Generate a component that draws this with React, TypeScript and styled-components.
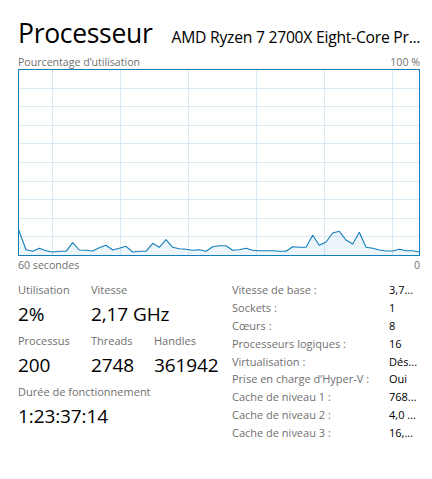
import React from "react";
import styled, { createGlobalStyle } from "styled-components";

const Global = createGlobalStyle`
  html, body { margin: 0; padding: 0; background: #ffffff; }
  body { font-family: "Open Sans", "Noto Sans", sans-serif; color: #000; }
`;

const Page = styled.div`
  width: 432px;
  height: 479px;
  box-sizing: border-box;
  padding: 17px 0 0 18px;
  overflow: hidden;
`;

const Header = styled.div`
  display: flex;
  align-items: baseline;
  width: 414px;
  white-space: nowrap;
`;

const Title = styled.div`
  font-size: 26.5px;
  line-height: 32px;
  letter-spacing: -0.3px;
  color: #000;
`;

const Model = styled.div`
  margin-left: 19px;
  font-size: 15.7px;
  letter-spacing: -0.25px;
  color: #000;
`;

const AxisRow = styled.div<{ $top: number }>`
  display: flex;
  justify-content: space-between;
  width: 402px;
  margin-top: ${(p) => p.$top}px;
  font-size: 10.6px;
  line-height: 14px;
  color: #707070;
`;

const ChartBox = styled.div`
  width: 402px;
  height: 187px;
  box-sizing: border-box;
  border: 1px solid #117dbb;
`;

const ChartSvg = styled.svg`
  display: block;
  width: 400px;
  height: 185px;
`;

const Stats = styled.div`
  display: flex;
  margin-top: 10px;
`;

const LeftStats = styled.div`
  display: grid;
  grid-template-columns: 73px 63px auto;
  grid-auto-rows: 51px;
  width: 214px;
`;

const Stat = styled.div<{ $span?: number }>`
  grid-column: span ${(p) => p.$span ?? 1};
  display: flex;
  flex-direction: column;
  white-space: nowrap;
`;

const StatLabel = styled.div`
  font-size: 11px;
  line-height: 16px;
  margin-bottom: 3px;
  color: #707070;
`;

const StatValue = styled.div`
  font-size: 19px;
  line-height: 26px;
  color: #000;
  letter-spacing: -0.1px;
`;

const InfoTable = styled.div`
  display: grid;
  grid-template-columns: 157px auto;
  grid-auto-rows: 17.9px;
  width: 188px;
  white-space: nowrap;
  font-size: 11px;
  line-height: 16px;
`;

const InfoLabel = styled.div`
  color: #707070;
`;

const InfoValue = styled.div`
  color: #000;
`;

const points: [number, number][] = [
  [19, 231.7], [26, 250.7], [32.7, 252.3], [39.3, 249.3], [46, 251.7], [52.7, 253],
  [59.3, 252.3], [66, 252.3], [72.7, 243.7], [79.3, 251], [86, 251.3], [92.7, 252],
  [99.3, 248.7], [106, 246.3], [112.7, 251], [119.3, 249.3], [126, 247.3], [132.7, 253],
  [139.3, 252.3], [146, 252.3], [152.7, 244.3], [159.3, 248.3], [166, 240.7], [172.7, 248.3],
  [179.3, 249.7], [186, 250.3], [192.7, 251.3], [199.3, 250.7], [206, 252.3], [212.7, 247.7],
  [219.3, 246.7], [226, 246.7], [232.7, 251.3], [239.3, 250.7], [246, 249.3], [252.7, 251.3],
  [259.3, 251.7], [266, 251.7], [272.7, 251.7], [279.3, 252.3], [286, 252.3], [292.7, 247.7],
  [299.3, 248.3], [306, 248.3], [312.7, 236.3], [319.3, 246.3], [326, 243], [332.7, 234],
  [339.3, 232.3], [346, 241], [352.7, 245], [359.3, 233.3], [366, 248.3], [372.7, 249.3],
  [379.3, 251], [386, 252], [392.7, 252], [399.3, 250.3], [406, 251.7], [412.7, 251.7], [419, 253],
];

const vLines = [52, 120, 188, 256, 324, 392];
const hLines = Array.from({ length: 9 }, (_, i) => 70 + 18.6 * (i + 1));

function Chart() {
  const line = points.map(([x, y]) => `${x},${y}`).join(" ");
  const area = `19,256 ${line} 419,256`;
  return (
    <ChartBox>
      <ChartSvg viewBox="19 71 400 185" preserveAspectRatio="none">
        {vLines.map((x) => (
          <line key={`v${x}`} x1={x + 0.5} y1={71} x2={x + 0.5} y2={256} stroke="#d9eaf4" strokeWidth={1} />
        ))}
        {hLines.map((y) => (
          <line key={`h${y}`} x1={19} y1={Math.round(y) + 0.5} x2={419} y2={Math.round(y) + 0.5} stroke="#d9eaf4" strokeWidth={1} />
        ))}
        <polygon points={area} fill="rgba(17,125,187,0.08)" />
        <polyline points={line} fill="none" stroke="#117dbb" strokeWidth={1.1} strokeLinejoin="round" />
      </ChartSvg>
    </ChartBox>
  );
}

const info: [string, string][] = [
  ["Vitesse de base :", "3,7..."],
  ["Sockets :", "1"],
  ["Cœurs :", "8"],
  ["Processeurs logiques :", "16"],
  ["Virtualisation :", "Dés..."],
  ["Prise en charge d’Hyper-V :", "Oui"],
  ["Cache de niveau 1 :", "768..."],
  ["Cache de niveau 2 :", "4,0 ..."],
  ["Cache de niveau 3 :", "16,..."],
];

export default function App() {
  return (
    <>
      <Global />
      <Page>
        <Header>
          <Title>Processeur</Title>
          <Model>AMD Ryzen 7 2700X Eight-Core Pr...</Model>
        </Header>
        <AxisRow $top={6}>
          <span>Pourcentage d’utilisation</span>
          <span>100 %</span>
        </AxisRow>
        <Chart />
        <AxisRow $top={2}>
          <span>60 secondes</span>
          <span>0</span>
        </AxisRow>
        <Stats>
          <LeftStats>
            <Stat>
              <StatLabel>Utilisation</StatLabel>
              <StatValue>2%</StatValue>
            </Stat>
            <Stat $span={2}>
              <StatLabel>Vitesse</StatLabel>
              <StatValue>2,17 GHz</StatValue>
            </Stat>
            <Stat>
              <StatLabel>Processus</StatLabel>
              <StatValue>200</StatValue>
            </Stat>
            <Stat>
              <StatLabel>Threads</StatLabel>
              <StatValue>2748</StatValue>
            </Stat>
            <Stat>
              <StatLabel>Handles</StatLabel>
              <StatValue>361942</StatValue>
            </Stat>
            <Stat $span={3}>
              <StatLabel>Durée de fonctionnement</StatLabel>
              <StatValue>1:23:37:14</StatValue>
            </Stat>
          </LeftStats>
          <InfoTable>
            {info.map(([k, v]) => (
              <React.Fragment key={k}>
                <InfoLabel>{k}</InfoLabel>
                <InfoValue>{v}</InfoValue>
              </React.Fragment>
            ))}
          </InfoTable>
        </Stats>
      </Page>
    </>
  );
}
